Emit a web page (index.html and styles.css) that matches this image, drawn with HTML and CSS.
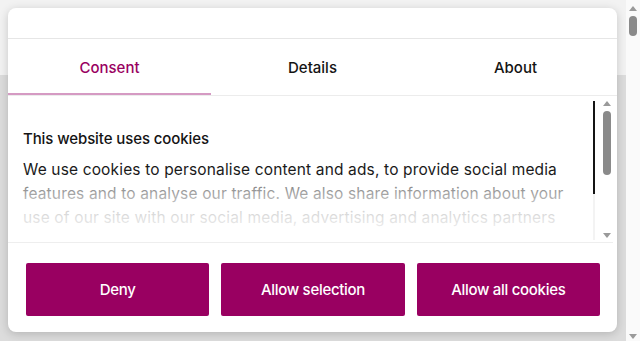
FILE: index.html
```html
<!DOCTYPE html>
<html lang="en">
<head>
    <meta charset="UTF-8">
    <meta name="viewport" content="width=device-width, initial-scale=1.0">
    <title>Cookie consent</title>
    <link rel="stylesheet" href="styles.css">
</head>
<body>
    <div id="page">
        <div class="backdrop">
            <div class="page-header"></div>
            <div class="page-body"></div>
        </div>
        <div class="scrollbar page-scroll">
            <span class="arrow up"></span>
            <span class="track"><span class="thumb"></span></span>
            <span class="arrow down"></span>
        </div>
    </div>

    <div id="dialog">
        <div class="dialog-top"></div>

        <div class="tabs">
            <div class="tab active">Consent</div>
            <div class="tab">Details</div>
            <div class="tab">About</div>
        </div>

        <div class="content">
            <div class="text">
                <h2>This website uses cookies</h2>
                <p>We use cookies to personalise content and ads, to provide social media features and to analyse our traffic. We also share information about your use of our site with our social media, advertising and analytics partners</p>
            </div>
            <div class="inner-line"><span></span></div>
            <div class="scrollbar inner-scroll">
                <span class="arrow up"></span>
                <span class="track"><span class="thumb"></span></span>
                <span class="arrow down"></span>
            </div>
        </div>

        <div class="buttons">
            <button class="btn">Deny</button>
            <button class="btn">Allow selection</button>
            <button class="btn">Allow all cookies</button>
        </div>
    </div>
</body>
</html>
```

FILE: styles.css
```css
html, body {
    margin: 0;
    height: 100%;
    overflow: hidden;
}
body {
    font-family: Inter, "Liberation Sans", Arial, sans-serif;
    color: #141414;
    background-color: #dedede;
}
#page {
    display: flex;
    height: 341px;
}
.backdrop {
    flex: 1;
    display: flex;
    flex-direction: column;
}
.page-header {
    height: 75px;
    background-color: #f2f2f2;
}
.page-body {
    flex: 1;
    background-color: #dcdcdc;
}

/* fake scrollbars */
.scrollbar {
    display: flex;
    flex-direction: column;
    align-items: center;
}
.scrollbar .track {
    flex: 1;
    width: 100%;
    display: flex;
    justify-content: center;
}
.scrollbar .thumb {
    display: block;
    width: 8px;
    border-radius: 4px;
    background: #8a8a8a;
}
.arrow {
    width: 0;
    height: 0;
    border-left: 4px solid transparent;
    border-right: 4px solid transparent;
}
.arrow.up {
    border-bottom: 5px solid #9a9a9a;
}
.arrow.down {
    border-top: 5px solid #9a9a9a;
}
.page-scroll {
    width: 14px;
    background: #fafafa;
    padding: 6px 0 2px;
}
.page-scroll .track {
    padding-top: 5px;
}
.page-scroll .thumb {
    height: 20px;
}

/* dialog */
#dialog {
    position: absolute;
    left: 8px;
    top: 8px;
    width: 609px;
    height: 324px;
    background: #fff;
    border-radius: 8px;
    box-shadow: 0 2px 10px rgba(0, 0, 0, 0.18);
    display: flex;
    flex-direction: column;
    overflow: hidden;
}
.dialog-top {
    height: 30px;
    border-bottom: 1px solid #e6e6e6;
}
.tabs {
    display: flex;
    border-bottom: 1px solid #ececec;
}
.tab {
    flex: 1;
    height: 54px;
    line-height: 58px;
    text-align: center;
    font-size: 15px;
    font-weight: 500;
    color: #141414;
    border-bottom: 2px solid transparent;
}
.tab.active {
    color: #990061;
    border-bottom-color: #d59ac3;
}

.content {
    height: 146px;
    display: flex;
    border-bottom: 1px solid #eeeeee;
    margin-right: 4px;
}
.text {
    flex: 1;
    position: relative;
    padding: 33px 0 0 15px;
    overflow: hidden;
}
.text::after {
    content: "";
    position: absolute;
    left: 0;
    right: 0;
    top: 84px;
    bottom: 0;
    background: linear-gradient(rgba(255, 255, 255, 0.4), rgba(255, 255, 255, 0.8) 45%, #fff);
}
.text h2 {
    margin: 0 0 10px;
    font-size: 15px;
    font-weight: 500;
    letter-spacing: -0.1px;
}
.text p {
    margin: 0;
    font-size: 15.5px;
    line-height: 24px;
    letter-spacing: 0.15px;
    color: #1a1a1a;
}
.inner-line {
    width: 2px;
    padding: 5px 0 2px;
    margin: 0 6px 0 8px;
    background: #f3f3f3;
    background-clip: content-box;
}
.inner-line span {
    display: block;
    height: 93px;
    background: #141414;
}
.inner-scroll {
    width: 12px;
    padding: 5px 0 4px;
}
.inner-scroll .track {
    padding: 5px 0;
}
.inner-scroll .thumb {
    height: 64px;
}

.buttons {
    display: flex;
    gap: 12px;
    padding: 20px 17px 0 18px;
}
.btn {
    flex: 1;
    height: 53px;
    border: 0;
    border-radius: 2px;
    background: #990061;
    color: #fff;
    font-family: inherit;
    font-size: 15px;
    font-weight: 500;
    letter-spacing: -0.3px;
}
```
